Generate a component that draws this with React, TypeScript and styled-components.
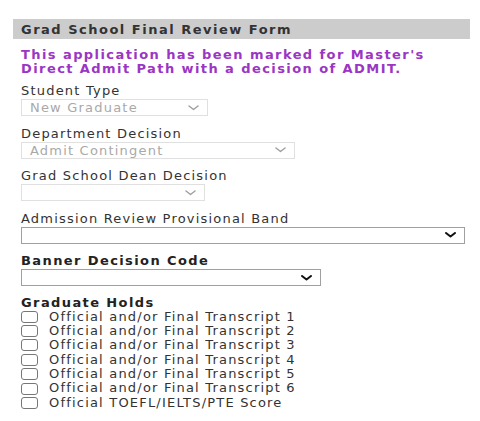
import * as React from 'react';
import styled, { createGlobalStyle } from 'styled-components';

const GlobalStyle = createGlobalStyle`
  html, body {
    margin: 0;
    padding: 0;
    background: #ffffff;
  }
  body {
    font-family: 'DejaVu Sans', Verdana, sans-serif;
    font-size: 13px;
    letter-spacing: 1.2px;
    color: #333333;
  }
`;

const Panel = styled.section`
  width: 457px;
  margin: 19px 0 0 13px;
`;

const Header = styled.h1`
  margin: 0;
  height: 20px;
  padding: 0 8px;
  background: #cccccc;
  font-size: 13px;
  font-weight: bold;
  letter-spacing: 1.5px;
  line-height: 21px;
  color: #333333;
`;

const Body = styled.div`
  padding: 0 8px;
`;

const Notice = styled.p`
  margin: 9px 0 7px;
  font-size: 13px;
  font-weight: bold;
  letter-spacing: 1.42px;
  line-height: 14px;
  color: #9b35c4;
`;

const Field = styled.div`
  margin-bottom: 9.5px;
`;

const Label = styled.div<{ $strong?: boolean }>`
  font-size: 13px;
  line-height: 16px;
  font-weight: ${(p) => (p.$strong ? 'bold' : 'normal')};
  letter-spacing: ${(p) => (p.$strong ? '1.4px' : '1.2px')};
  color: ${(p) => (p.$strong ? '#222222' : '#333333')};
`;

const SelectBox = styled.div<{ $width: number; $active?: boolean }>`
  box-sizing: border-box;
  width: ${(p) => p.$width}px;
  height: 17px;
  display: flex;
  align-items: center;
  justify-content: space-between;
  padding: 0 8px 0 8px;
  border: 1px solid ${(p) => (p.$active ? '#a0a0a0' : '#e0e0e0')};
  background: #ffffff;
  font-size: 13px;
  line-height: 15px;
  color: #a9a9a9;
`;

const Chevron = styled.svg`
  flex: none;
  width: 11px;
  height: 6px;
`;

const Holds = styled.div`
  margin-top: 1px;
`;

const HoldsTitle = styled(Label)`
  line-height: 14px;
`;

const CheckRow = styled.label`
  display: flex;
  align-items: center;
  gap: 11px;
  height: 14.4px;
  font-size: 13px;
  line-height: 14.4px;
  color: #333333;
`;

const Box = styled.span`
  box-sizing: border-box;
  flex: none;
  width: 17px;
  height: 12px;
  border: 1.5px solid #777777;
  border-radius: 3px;
  background: #ffffff;
`;

interface SelectProps {
  width: number;
  value?: string;
  active?: boolean;
}

function Select({ width, value, active }: SelectProps) {
  return (
    <SelectBox $width={width} $active={active}>
      <span>{value}</span>
      <Chevron viewBox="0 0 11 6">
        <path
          d="M1 1 L5.5 4.5 L10 1"
          fill="none"
          stroke={active ? '#111111' : '#a0a0a0'}
          strokeWidth={active ? 2 : 1.5}
          strokeLinecap="round"
          strokeLinejoin="round"
        />
      </Chevron>
    </SelectBox>
  );
}

const holds = [
  'Official and/or Final Transcript 1',
  'Official and/or Final Transcript 2',
  'Official and/or Final Transcript 3',
  'Official and/or Final Transcript 4',
  'Official and/or Final Transcript 5',
  'Official and/or Final Transcript 6',
  'Official TOEFL/IELTS/PTE Score',
];

export default function App() {
  return (
    <>
      <GlobalStyle />
      <Panel>
        <Header>Grad School Final Review Form</Header>
        <Body>
          <Notice>
            This application has been marked for Master's
            <br />
            Direct Admit Path with a decision of ADMIT.
          </Notice>
          <Field>
            <Label>Student Type</Label>
            <Select width={187} value="New Graduate" />
          </Field>
          <Field>
            <Label>Department Decision</Label>
            <Select width={274} value="Admit Contingent" />
          </Field>
          <Field>
            <Label>Grad School Dean Decision</Label>
            <Select width={184} />
          </Field>
          <Field>
            <Label>Admission Review Provisional Band</Label>
            <Select width={444} active />
          </Field>
          <Field>
            <Label $strong>Banner Decision Code</Label>
            <Select width={300} active />
          </Field>
          <Holds>
            <HoldsTitle $strong>Graduate Holds</HoldsTitle>
            {holds.map((h) => (
              <CheckRow key={h}>
                <Box />
                {h}
              </CheckRow>
            ))}
          </Holds>
        </Body>
      </Panel>
    </>
  );
}
